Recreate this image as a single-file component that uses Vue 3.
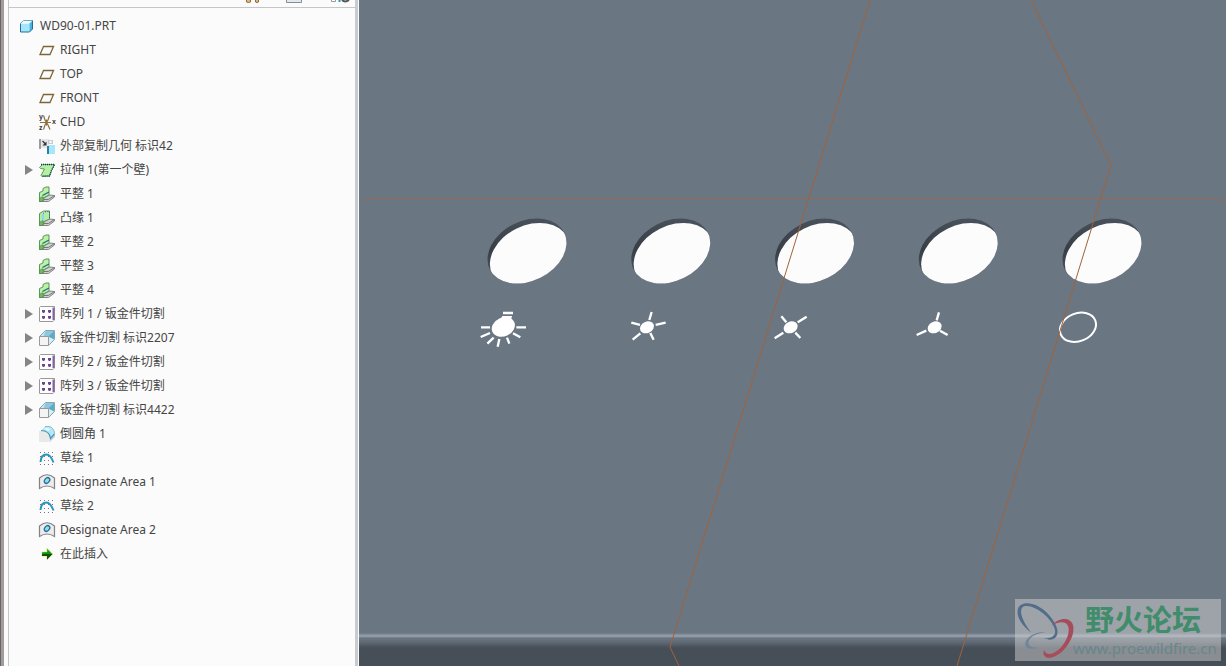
<template>
  <div class="workspace">
    <aside class="navigator">
      <div class="tool-strip">
        <svg width="110" height="7" viewBox="245 0 110 7" aria-hidden="true">
          <path d="M246.500-1h4v3q-2 1-4 0zM255.500-1h3v3q-1.500 1-3 0z" fill="#dcbb82" stroke="#8d6c3c" />
          <path d="M286.500-1h15v3.500h-15z" fill="#dfe9ee" stroke="#8a8d90" />
          <path d="M331.500-1h4v2.500h-4z" fill="#fff" stroke="#999" />
          <path d="M339.500 0v2" stroke="#2a9ac0" stroke-width="2" />
          <path d="M342 0q3 3 7 0" fill="none" stroke="#555" stroke-width="2" />
        </svg>
      </div>

      <ul class="tree">
        <li class="tree-row">
          <svg class="icon" viewBox="0 0 16 16" aria-hidden="true">
            <path d="M1.500 5.500h9v8.500h-9z" fill="#a4e6fb" />
            <path d="M1.500 5.500l3-3h9l-3 3z" fill="#effcff" />
            <path d="M10.500 5.500l3-3v8.500l-3 3z" fill="#48b3de" />
            <path d="M1.500 5.500l3-3h9" fill="none" stroke="#6fa9bf" />
            <path d="M1.500 5.500v8.500h9l3-3v-8.500" fill="none" stroke="#236f94" />
          </svg>
          <span class="label">WD90-01.PRT</span>
        </li>
        <li v-for="item in items" :key="item.label" class="tree-row">
          <span class="toggle-slot">
            <button
              v-if="item.children"
              class="toggle"
              :aria-label="item.label"
              :aria-expanded="item.open"
              @click="item.open = !item.open"
            ></button>
          </span>
          <svg class="icon" viewBox="0 0 16 16" aria-hidden="true">
            <path v-if="item.icon === 'plane'" d="M4.500 4.500h10l-3.500 8h-10z" fill="none" stroke="#7e6539" stroke-width="1.300" />

            <g v-else-if="item.icon === 'csys'">
              <path d="M1 8.500h11M4.500 1.500l1.500 4.500 1.500 2.500-1.500 2.500-1.500 4.500M10.500 1.500l-1.500 4.500-1.500 2.500 1.500 2.500 2 4.500M7.500 5.500v6" fill="none" stroke="#8b6f3f" stroke-width="1.200" />
              <text class="axis" x="0" y="5">y</text>
              <text class="axis" x="0" y="16">z</text>
              <text class="axis" x="13" y="10">x</text>
            </g>

            <g v-else-if="item.icon === 'copy'">
              <path d="M0 1h2v10h-2z" fill="#9b9d9f" />
              <path d="M2 1h8v9h-8z" fill="#e6e6e6" />
              <path d="M9 2h5v4h-5z" fill="#c9cbcd" />
              <path d="M10.500 3h2v2h-2z" fill="#fff" />
              <path d="M3.500 3l3 3" stroke="#333" stroke-width="1.300" />
              <path d="M7.500 3.500v4h-4z" fill="#333" />
              <path d="M8 8h2v8h-2z" fill="#2f7fa5" />
              <path d="M10 7h6v9h-6z" fill="#a7e7fb" />
            </g>

            <g v-else-if="item.icon === 'extrude'">
              <path d="M.5 5.500l3-3h12l-3 6-2 5.500-7.500.5-1-1 3.500-6.500-4-.5z" fill="#b6f0a0" stroke="#5aa05a" />
              <path d="M2 2.500h13.500l-3 6-2 5.500h-8" fill="none" stroke="#183a66" stroke-width="1.400" stroke-dasharray="1 1" />
            </g>

            <g v-else-if="item.icon === 'flat' || item.icon === 'flange'">
              <path d="M5 12l5-3 5.500.5v1.500l-6 4.500h-5.500z" fill="#d0d0d0" stroke="#858585" />
              <path d="M5 13.500h4.500l6-4" fill="none" stroke="#777" />
              <template v-if="item.icon === 'flat'">
                <path d="M.5 6.500l3.500-1.500v-2.500l3-1.500h3v8l-6 3v3.500h-3.500z" fill="#bdf0a9" stroke="#5c9856" />
                <path d="M3.500 9.500l6.500-3.500" stroke="#246b83" stroke-width="1.400" />
              </template>
              <template v-else>
                <path d="M.5 3.500l4-2.500h6v8l-6.500 3v3.500h-3.500z" fill="#b5eba5" stroke="#5c9856" />
                <path d="M4 4v6.500" stroke="#87d7f2" stroke-width="2" />
                <path d="M4 3.500l3-2h3.500v7" fill="none" stroke="#235b86" stroke-dasharray="1 1.500" />
              </template>
              <path d="M.5 12.500l3-2 1 3-2 2h-2z" fill="#72b568" stroke="#458641" stroke-width=".6" />
            </g>

            <g v-else-if="item.icon === 'pattern'">
              <path d="M.5 1.500l1-1h14v13.500l-1.500 1.500h-13.500z" fill="#fdfdfd" stroke="#999" />
              <path d="M14.500 1.500v12.500" stroke="#8264a3" stroke-width="2" />
              <path d="M3 4h3v3h-3zM9 4h3v3h-3zM3 10h3v3h-3zM9 10h3v3h-3z" fill="#b9a3cc" />
              <path d="M3 4h3v2h-1v1h-1v-1h-1zM9 4h3v2h-1v1h-1v-1h-1zM3 10h3v2h-1v1h-1v-1h-1zM9 10h3v2h-1v1h-1v-1h-1z" fill="#6b4690" />
            </g>

            <g v-else-if="item.icon === 'cut'">
              <path d="M.5 6.500l6-6h9v9l-6 6h-9z" fill="#cbe9f3" />
              <path d="M6.500 1h8.500v8.500l-5.500-3h-5z" fill="#8bc9df" />
              <path d="M9.500 6.500l5.500-5.500v8.500z" fill="#5ca9c8" />
              <path d="M9.500 7l5.500 2.500-5.500 5.500z" fill="#d5edf5" />
              <path d="M.5 6.500l6-6h9v9l-6 6" fill="none" stroke="#8fa3aa" />
              <path d="M.5 6.500h9v9h-9z" fill="#f4f4f4" stroke="#999" />
            </g>

            <g v-else-if="item.icon === 'round'">
              <path d="M0 5h6q4 1 5 5v6h-11z" fill="#e9e9e9" />
              <path d="M11 11l5-5v5l-5 5z" fill="#cfd3d5" />
              <path d="M2 4.500l4-4h4q5 1 5.500 7l-4 5q-1-8-9.500-8z" fill="#b4e8f7" />
              <path d="M6 .5h4q5 1 5.500 7" fill="none" stroke="#8db9ca" />
              <path d="M2 4.500q8.500 0 9.500 8l4-4.500" fill="none" stroke="#3f98bb" stroke-width="1.200" />
              <path d="M5 3q3-2 6 0l-1.500 2z" fill="#fff" opacity=".7" />
            </g>

            <g v-else-if="item.icon === 'sketch'">
              <path d="M1 2.500h14M1 6.500h14M1 10.500h14M1 14.500h14" stroke="#77797b" stroke-dasharray="1 3" />
              <path d="M1.500 12q.5-7.500 6-7.500 4 0 7 8" fill="none" stroke="#2994c2" stroke-width="2" />
            </g>

            <g v-else-if="item.icon === 'area'">
              <path d="M.5 4q7.500-6.500 15 0v10.500q-7.500-5-15 0z" fill="#ececec" stroke="#818384" stroke-width="1.200" />
              <ellipse cx="8" cy="6.500" rx="3.200" ry="2.300" transform="rotate(-45 8 6.500)" fill="#92dcf5" stroke="#236f90" stroke-width="1.300" />
            </g>

            <g v-else>
              <path d="M3 6h5v-3.500l5.500 5.500-5.500 5.500v-3.500h-5z" fill="#0b9b13" stroke="#c0d62d" stroke-width=".5" />
              <path d="M3 8h10.500l-5.500 5.500v-3.500h-5z" fill="#184c13" />
            </g>
          </svg>
          <span class="label">{{ item.label }}</span>
        </li>
      </ul>
    </aside>

    <main class="viewport">
      <svg class="scene" viewBox="359 0 867 666" preserveAspectRatio="xMinYMin slice" role="img" aria-label="WD90-01.PRT">
        <defs>
          <linearGradient id="bend" x1="0" y1="0" x2="0" y2="1">
            <stop offset="0" stop-color="#6b7683" />
            <stop offset=".16" stop-color="#909aaa" />
            <stop offset=".24" stop-color="#8f99a9" />
            <stop offset=".32" stop-color="#6c7784" />
            <stop offset=".6" stop-color="#606a75" />
            <stop offset="1" stop-color="#464e57" />
          </linearGradient>
          <linearGradient id="wall" x1="0" y1="1" x2="1" y2="0">
            <stop offset="0" stop-color="#4d5661" />
            <stop offset=".3" stop-color="#383f47" />
            <stop offset=".65" stop-color="#454d57" />
            <stop offset="1" stop-color="#4b545f" />
          </linearGradient>
          <clipPath id="hole">
            <ellipse rx="41.500" ry="30" transform="rotate(-26.400)" />
          </clipPath>
        </defs>

        <rect x="359" y="633" width="867" height="15" fill="url(#bend)" />
        <rect x="359" y="648" width="867" height="18" fill="#464e57" />

        <!-- punched holes with visible sheet thickness -->
        <g v-for="x in holes" :key="x" :transform="`translate(${x} 251)`">
          <g clip-path="url(#hole)">
            <rect x="-42" y="-35" width="84" height="70" fill="url(#wall)" />
            <ellipse cx="2.700" cy="4.800" rx="41.800" ry="30.300" transform="rotate(-26.400 2.700 4.800)" fill="#fcfcfc" />
          </g>
        </g>

        <!-- lamp symbols, drawn at three units per pixel -->
        <g class="marks" transform="translate(470 205) scale(.3333)">
          <ellipse cx="100" cy="366" rx="36" ry="28" transform="rotate(-25 100 366)" />
          <path class="solid" d="M90 348l7-15h29l-4 16z" />
          <path d="M99 324h30M33 367h27M139 367h29M32 396l28-12M52 416l19-18M83 425l5-23M111 398l7 18M129 385l22 12" />
          <ellipse cx="531" cy="367" rx="22" ry="17" transform="rotate(-25 531 367)" />
          <path d="M545 321l-7 24M587 353l-30 7M484 353l26 7M488 404l23-19M541 384l10 20" />
        </g>
        <g class="marks" transform="translate(760 205) scale(.3333)">
          <ellipse cx="92" cy="367" rx="22" ry="17" transform="rotate(-25 92 367)" />
          <path d="M64 334l15 18M140 335l-27 17M44 400l26-17M106 383l15 16" />
          <ellipse cx="524" cy="367" rx="22" ry="17" transform="rotate(-25 524 367)" />
          <path d="M537 322l-7 24M470 390l29-13M540 377l23 13" />
        </g>
        <ellipse class="ring" cx="1078" cy="327.300" rx="18.600" ry="13.900" transform="rotate(-22 1078 327.300)" />

        <!-- datum plane edges -->
        <path class="datum level" d="M362 198.500H1226" />
        <path class="datum" d="M870 0L670 647L679 666M1031 0L1111 165L957 666" />
      </svg>

      <div class="watermark">
        <svg class="mark-logo" viewBox="45 27 180 186" aria-hidden="true">
          <path fill-rule="evenodd" d="M53 60C58 28 112 35 145 73C174 105 180 132 164 145C154 152 142 148 132 145C153 146 171 137 164 116C154 84 103 42 73 49C53 55 66 94 94 128C68 110 49 82 53 60Z" fill="#526d89" />
          <path d="M154 107C174 83 210 78 219 105C228 139 192 195 153 203C134 206 127 194 132 180C139 197 155 195 174 181C199 160 214 122 202 104C192 91 170 97 154 107Z" fill="#a74c5b" />
          <path d="M137 127C112 122 80 139 76 159C73 176 92 180 111 173C93 173 82 166 86 154C92 137 115 129 137 127Z" fill="#71859a" />
        </svg>
        <div class="mark-text">
          <strong>野火论坛</strong>
          <span>www.proewildfire.cn</span>
        </div>
      </div>
    </main>
  </div>
</template>

<script setup>
import { reactive } from 'vue'

const items = reactive([
  { label: 'RIGHT', icon: 'plane' },
  { label: 'TOP', icon: 'plane' },
  { label: 'FRONT', icon: 'plane' },
  { label: 'CHD', icon: 'csys' },
  { label: '外部复制几何 标识42', icon: 'copy' },
  { label: '拉伸 1(第一个壁)', icon: 'extrude', children: true, open: false },
  { label: '平整 1', icon: 'flat' },
  { label: '凸缘 1', icon: 'flange' },
  { label: '平整 2', icon: 'flat' },
  { label: '平整 3', icon: 'flat' },
  { label: '平整 4', icon: 'flat' },
  { label: '阵列 1 / 钣金件切割', icon: 'pattern', children: true, open: false },
  { label: '钣金件切割 标识2207', icon: 'cut', children: true, open: false },
  { label: '阵列 2 / 钣金件切割', icon: 'pattern', children: true, open: false },
  { label: '阵列 3 / 钣金件切割', icon: 'pattern', children: true, open: false },
  { label: '钣金件切割 标识4422', icon: 'cut', children: true, open: false },
  { label: '倒圆角 1', icon: 'round' },
  { label: '草绘 1', icon: 'sketch' },
  { label: 'Designate Area 1', icon: 'area' },
  { label: '草绘 2', icon: 'sketch' },
  { label: 'Designate Area 2', icon: 'area' },
  { label: '在此插入', icon: 'insert' }
])

// Hole centres along the row
const holes = [0, 1, 2, 3, 4].map((n) => 527 + n * 143.75)
</script>

<style>
body {
  margin: 0;
}
</style>

<style scoped>
.workspace {
  display: flex;
  min-height: 100vh;
  background: #fbfbfb;
  color: #454545;
  font-family: 'Noto Sans', 'Noto Sans CJK SC', sans-serif;
  font-size: 12px;
}

/* Model tree panel */
.navigator {
  box-sizing: border-box;
  flex: 0 0 358px;
  display: flex;
  border-left: 1px solid #6a6666;
  border-right: 3px solid #c8cccd;
  box-shadow: inset 3px 0 #a09c9c;
  flex-direction: column;
  padding-left: 7px;
}

.tool-strip {
  display: flex;
  justify-content: flex-end;
  height: 7px;
  border-left: 1px solid #c4c7ca;
  border-bottom: 1px solid #c4c7ca;
  overflow: hidden;
}

.tree {
  flex: 1;
  margin: 0;
  padding: 6px 0 6px 10px;
  border-left: 1px solid #c4c7ca;
  list-style: none;
}

.tree-row {
  display: flex;
  align-items: center;
  height: 24px;
}

.toggle-slot {
  display: flex;
  width: 20px;
  padding-left: 6px;
  box-sizing: border-box;
}

.toggle {
  width: 8px;
  height: 10px;
  padding: 0;
  border: 0;
  background: #858585;
  clip-path: polygon(0 0, 100% 50%, 0 100%);
  cursor: pointer;
}

.icon {
  flex: none;
  width: 16px;
  height: 16px;
  overflow: visible;
}

.axis {
  font: bold 7px 'Liberation Sans', sans-serif;
  fill: #333;
}

.label {
  margin-left: 5px;
  line-height: 24px;
  white-space: nowrap;
}

/* Model view */
.viewport {
  position: relative;
  flex: 1;
  min-width: 0;
  margin-left: 1px;
  background: #6b7683;
}

.scene {
  display: block;
  width: 100%;
  height: 100%;
}

.marks {
  fill: #fff;
}

.marks path {
  fill: none;
  stroke: #fff;
  stroke-width: 7;
}

.marks .solid {
  fill: #fff;
  stroke: none;
}

.ring {
  fill: none;
  stroke: #fff;
  stroke-width: 2;
}

.datum {
  fill: none;
  stroke: #a0633a;
  stroke-width: 1;
}

.level {
  stroke: #8f6a55;
}

.watermark {
  position: absolute;
  right: 5px;
  bottom: 5px;
  display: flex;
  width: 206px;
  height: 62px;
  background: rgba(214, 214, 214, 0.48);
}

.mark-logo {
  flex: none;
  width: 60px;
  height: 62px;
}

.mark-text {
  display: flex;
  flex-direction: column;
  margin-left: -2px;
}

.mark-text strong {
  margin-left: 12px;
  color: #418c6b;
  font: 700 29px/38px 'Noto Sans CJK SC', sans-serif;
}

.mark-text span {
  color: #66868a;
  font-size: 15px;
  line-height: 22px;
}
</style>
